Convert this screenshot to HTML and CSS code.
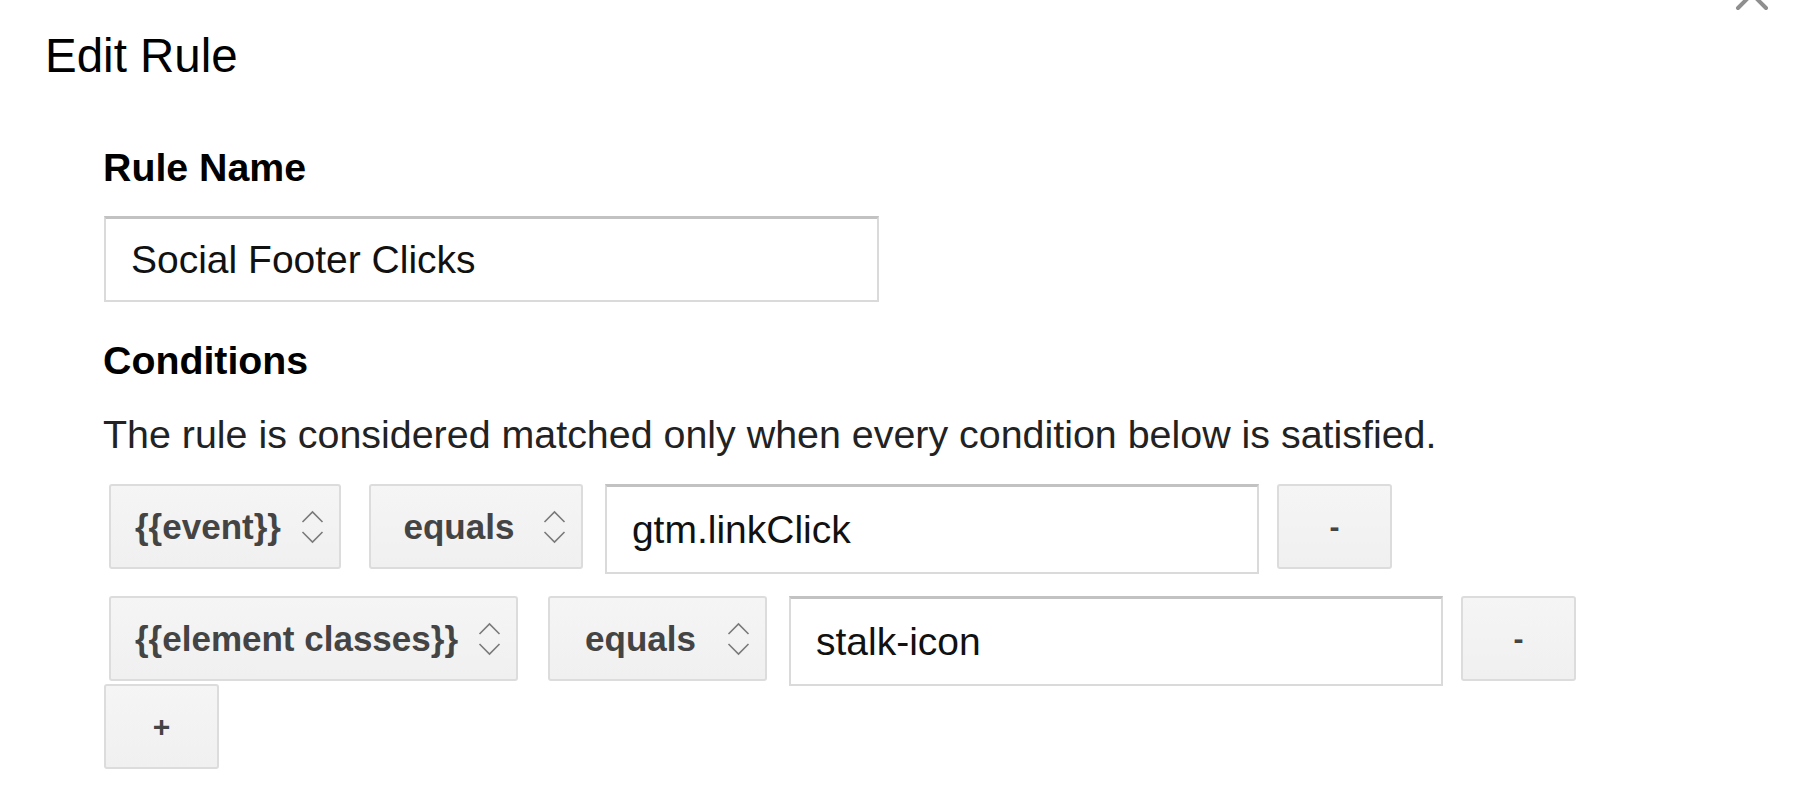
FILE: index.html
```html
<!DOCTYPE html>
<html lang="en">
<head>
    <meta charset="UTF-8">
    <title>Edit Rule</title>
    <link rel="stylesheet" href="styles.css">
</head>
<body>
<div class="dialog">
    <button class="close" aria-label="Close">
        <svg width="34" height="34" viewBox="0 0 34 34">
            <path d="M3 3 L31 31 M31 3 L3 31" stroke="#8f8f8f" stroke-width="4" stroke-linecap="round" fill="none"/>
        </svg>
    </button>

    <h1 class="title">Edit Rule</h1>

    <div class="form">
        <div class="section-title first">Rule Name</div>
        <div class="text-field name-field">Social Footer Clicks</div>

        <div class="section-title">Conditions</div>
        <p class="hint">The rule is considered matched only when every condition below is satisfied.</p>

        <div class="cond-row first">
            <div class="select var-select">
                <span class="select-label">{{event}}</span>
                <svg class="updown" width="23" height="34" viewBox="0 0 23 34">
                    <path d="M1.5 12 L11.5 2 L21.5 12 M1.5 22 L11.5 32 L21.5 22" stroke="#7a7a7a" stroke-width="1.6" fill="none"/>
                </svg>
            </div>
            <div class="select op-select">
                <span class="select-label">equals</span>
                <svg class="updown" width="23" height="34" viewBox="0 0 23 34">
                    <path d="M1.5 12 L11.5 2 L21.5 12 M1.5 22 L11.5 32 L21.5 22" stroke="#7a7a7a" stroke-width="1.6" fill="none"/>
                </svg>
            </div>
            <div class="text-field cond-value">gtm.linkClick</div>
            <button class="small-btn">-</button>
        </div>

        <div class="cond-row last">
            <div class="select var-select">
                <span class="select-label">{{element classes}}</span>
                <svg class="updown" width="23" height="34" viewBox="0 0 23 34">
                    <path d="M1.5 12 L11.5 2 L21.5 12 M1.5 22 L11.5 32 L21.5 22" stroke="#7a7a7a" stroke-width="1.6" fill="none"/>
                </svg>
            </div>
            <div class="select op-select">
                <span class="select-label">equals</span>
                <svg class="updown" width="23" height="34" viewBox="0 0 23 34">
                    <path d="M1.5 12 L11.5 2 L21.5 12 M1.5 22 L11.5 32 L21.5 22" stroke="#7a7a7a" stroke-width="1.6" fill="none"/>
                </svg>
            </div>
            <div class="text-field cond-value">stalk-icon</div>
            <button class="small-btn">-</button>
        </div>

        <button class="small-btn add-btn">+</button>
    </div>
</div>
</body>
</html>
```

FILE: styles.css
```css
body {
    margin: 0;
    background-color: #fff;
    font-family: "Liberation Sans", Arial, sans-serif;
    color: #000;
    overflow: hidden;
}

.dialog {
    position: relative;
    width: 1796px;
    height: 792px;
    padding-top: 32px;
    box-sizing: border-box;
}

.close {
    position: absolute;
    top: -23px;
    left: 1735px;
    padding: 0;
    border: 0;
    background: none;
}

.close svg {
    display: block;
}

.title {
    margin: 0 0 0 45px;
    font-size: 47.5px;
    line-height: 47px;
    font-weight: normal;
}

.form {
    margin-left: 103px;
}

.section-title {
    font-size: 39.3px;
    line-height: 38px;
    font-weight: bold;
    margin-top: 39px;
}

.section-title.first {
    margin-top: 69px;
}

.text-field {
    box-sizing: border-box;
    display: flex;
    align-items: center;
    border: 2px solid #dadada;
    border-top: 3px solid #c2c2c2;
    background: #fff;
    font-size: 39px;
    color: #111;
    padding-left: 25px;
}

.name-field {
    margin-top: 30px;
    margin-left: 1px;
    width: 775px;
    height: 86px;
}

.hint {
    margin: 36px 0 0 0;
    font-size: 39.4px;
    line-height: 39px;
    color: #222;
}

.cond-row {
    display: flex;
    align-items: flex-start;
    margin-top: 30px;
    margin-left: 6px;
}

.cond-row.last {
    margin-top: 22px;
}

.select {
    box-sizing: border-box;
    display: flex;
    align-items: center;
    height: 85px;
    padding: 0 15px 0 24px;
    border: 2px solid #dcdcdc;
    border-radius: 3px;
    background: linear-gradient(#f5f5f5, #f0f0f0);
    font-size: 35px;
    font-weight: bold;
    color: #444;
    white-space: nowrap;
}

.select-label {
    flex: 1;
    text-align: center;
    margin-right: 20px;
}

.updown {
    display: block;
    flex: none;
}

.var-select {
    margin-right: 30px;
}

.cond-row.first .var-select {
    margin-right: 28px;
}

.op-select {
    width: 214px;
    margin-right: 22px;
}

.cond-row.last .op-select {
    width: 219px;
}

.cond-value {
    width: 654px;
    height: 90px;
    margin-right: 18px;
}

.small-btn {
    box-sizing: border-box;
    width: 115px;
    height: 85px;
    padding: 0;
    border: 2px solid #dcdcdc;
    border-radius: 3px;
    background: linear-gradient(#f5f5f5, #f0f0f0);
    font-family: "Liberation Sans", Arial, sans-serif;
    font-size: 30px;
    font-weight: bold;
    color: #444;
}

.add-btn {
    display: block;
    margin-top: -2px;
    margin-left: 1px;
}
```
